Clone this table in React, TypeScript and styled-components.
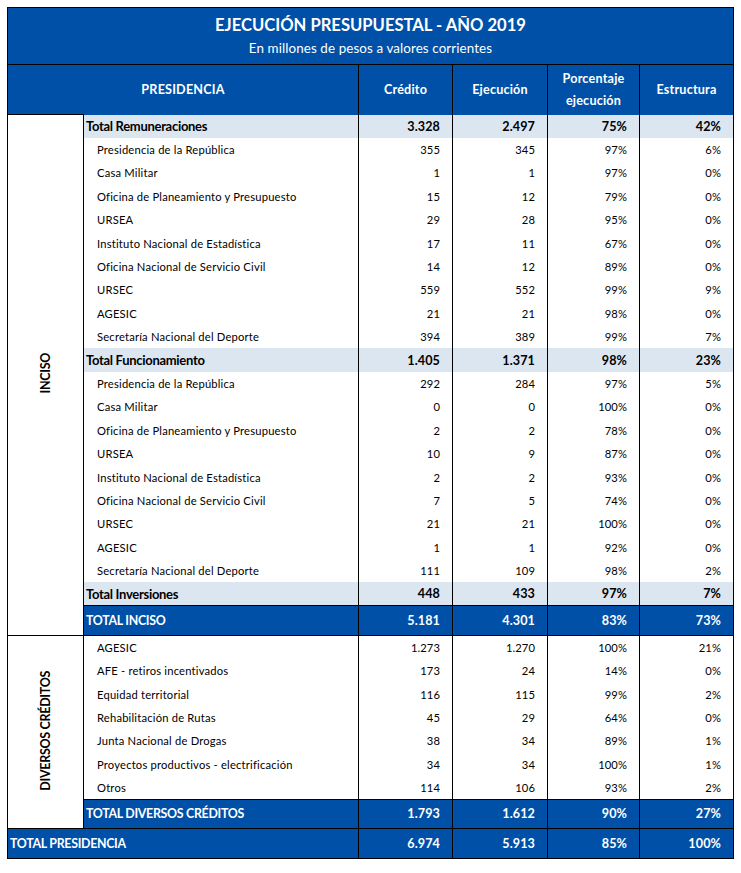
import React from "react";
import styled, { createGlobalStyle } from "styled-components";

const BLUE = "#0050a7";
const LIGHT = "#dce6f1";
const FONT = "Lato, 'Liberation Sans', sans-serif";

const Global = createGlobalStyle`
  html, body { margin: 0; padding: 0; background: #fff; }
  body { font-family: ${FONT}; color: #000; }
`;

const Page = styled.div`
  padding: 7px 0 0 7px;
`;

const Table = styled.table`
  border-collapse: collapse;
  table-layout: fixed;
  width: 727px;
  border: 1px solid #000;
  font-family: ${FONT};
`;

const TitleCell = styled.th`
  background: ${BLUE};
  color: #fff;
  height: 56px;
  padding: 0;
  text-align: center;
  border-bottom: 1px solid #000;
  vertical-align: top;
`;

const Title = styled.div`
  font-size: 16.6px;
  font-weight: 700;
  margin-top: 7px;
  line-height: 20px;
`;

const Subtitle = styled.div`
  font-size: 13.4px;
  font-weight: 400;
  margin-top: 5px;
  line-height: 17px;
  letter-spacing: 0.1px;
`;

const HeadCell = styled.th`
  background: ${BLUE};
  color: #fff;
  height: 49px;
  padding: 0;
  font-size: 12.6px;
  font-weight: 700;
  line-height: 22px;
  text-align: center;
  border-left: 1px solid #000;
  letter-spacing: 0.2px;
`;

const Row = styled.tr<{ $h?: number }>`
  height: ${(p) => p.$h ?? 23.4}px;
`;

const SideCell = styled.td`
  border-right: 1px solid #000;
  border-top: 1px solid #000;
  padding: 0;
  text-align: center;
  vertical-align: middle;
`;

const Vertical = styled.span`
  display: inline-block;
  writing-mode: vertical-rl;
  transform: rotate(180deg);
  font-size: 12.5px;
  font-weight: 700;
  letter-spacing: -0.3px;
`;

type Kind = "item" | "sub" | "total";

const Label = styled.td<{ $kind: Kind; $line?: boolean }>`
  padding: 0 0 0 ${(p) => (p.$kind === "item" ? 13 : 2)}px;
  font-size: ${(p) => (p.$kind === "item" ? 11.2 : p.$kind === "sub" ? 13 : 12.4)}px;
  font-weight: ${(p) => (p.$kind === "item" ? 400 : 700)};
  background: ${(p) => (p.$kind === "sub" ? LIGHT : p.$kind === "total" ? BLUE : "#fff")};
  color: ${(p) => (p.$kind === "total" ? "#fff" : "#000")};
  border-top: ${(p) => (p.$line ? "1px solid #000" : "none")};
  white-space: nowrap;
  letter-spacing: ${(p) => (p.$kind === "item" ? "0.2px" : "-0.3px")};
  vertical-align: middle;
`;

const Num = styled.td<{ $kind: Kind; $line?: boolean }>`
  padding: 0 12px 0 0;
  text-align: right;
  font-size: ${(p) => (p.$kind === "item" ? 11.2 : 12.6)}px;
  font-weight: ${(p) => (p.$kind === "item" ? 400 : 700)};
  background: ${(p) => (p.$kind === "sub" ? LIGHT : p.$kind === "total" ? BLUE : "#fff")};
  color: ${(p) => (p.$kind === "total" ? "#fff" : "#000")};
  border-left: 1px solid #000;
  border-top: ${(p) => (p.$line ? "1px solid #000" : "none")};
  vertical-align: middle;
  letter-spacing: 0.1px;
`;

type Line = [string, string, string, string, string];

const items = (vals: [string, string, string, string][]): Line[] => {
  const names = [
    "Presidencia de la República",
    "Casa Militar",
    "Oficina de Planeamiento y Presupuesto",
    "URSEA",
    "Instituto Nacional de Estadística",
    "Oficina Nacional de Servicio Civil",
    "URSEC",
    "AGESIC",
    "Secretaría Nacional del Deporte",
  ];
  return vals.map((v, i) => [names[i], ...v] as Line);
};

const rem = items([
  ["355", "345", "97%", "6%"],
  ["1", "1", "97%", "0%"],
  ["15", "12", "79%", "0%"],
  ["29", "28", "95%", "0%"],
  ["17", "11", "67%", "0%"],
  ["14", "12", "89%", "0%"],
  ["559", "552", "99%", "9%"],
  ["21", "21", "98%", "0%"],
  ["394", "389", "99%", "7%"],
]);

const fun = items([
  ["292", "284", "97%", "5%"],
  ["0", "0", "100%", "0%"],
  ["2", "2", "78%", "0%"],
  ["10", "9", "87%", "0%"],
  ["2", "2", "93%", "0%"],
  ["7", "5", "74%", "0%"],
  ["21", "21", "100%", "0%"],
  ["1", "1", "92%", "0%"],
  ["111", "109", "98%", "2%"],
]);

const diversos: Line[] = [
  ["AGESIC", "1.273", "1.270", "100%", "21%"],
  ["AFE - retiros incentivados", "173", "24", "14%", "0%"],
  ["Equidad territorial", "116", "115", "99%", "2%"],
  ["Rehabilitación de Rutas", "45", "29", "64%", "0%"],
  ["Junta Nacional de Drogas", "38", "34", "89%", "1%"],
  ["Proyectos productivos - electrificación", "34", "34", "100%", "1%"],
  ["Otros", "114", "106", "93%", "2%"],
];

const Cells: React.FC<{ line: Line; kind: Kind; lineTop?: boolean }> = ({ line, kind, lineTop }) => (
  <>
    <Label $kind={kind} $line={lineTop}>{line[0]}</Label>
    {line.slice(1).map((v, i) => (
      <Num key={i} $kind={kind} $line={lineTop}>{v}</Num>
    ))}
  </>
);

export default function App() {
  const incisoRows: { line: Line; kind: Kind }[] = [
    { line: ["Total Remuneraciones", "3.328", "2.497", "75%", "42%"], kind: "sub" },
    ...rem.map((l) => ({ line: l, kind: "item" as Kind })),
    { line: ["Total Funcionamiento", "1.405", "1.371", "98%", "23%"], kind: "sub" },
    ...fun.map((l) => ({ line: l, kind: "item" as Kind })),
    { line: ["Total Inversiones", "448", "433", "97%", "7%"], kind: "sub" },
  ];

  return (
    <Page>
      <Global />
      <Table>
        <colgroup>
          <col style={{ width: 76 }} />
          <col style={{ width: 275 }} />
          <col style={{ width: 94 }} />
          <col style={{ width: 95 }} />
          <col style={{ width: 92 }} />
          <col style={{ width: 94 }} />
        </colgroup>
        <thead>
          <tr>
            <TitleCell colSpan={6}>
              <Title>EJECUCIÓN PRESUPUESTAL - AÑO 2019</Title>
              <Subtitle>En millones de pesos a valores corrientes</Subtitle>
            </TitleCell>
          </tr>
          <tr>
            <HeadCell colSpan={2}>PRESIDENCIA</HeadCell>
            <HeadCell>Crédito</HeadCell>
            <HeadCell>Ejecución</HeadCell>
            <HeadCell>
              Porcentaje
              <br />
              ejecución
            </HeadCell>
            <HeadCell>Estructura</HeadCell>
          </tr>
        </thead>
        <tbody>
          {incisoRows.map((r, i) => (
            <Row key={i}>
              {i === 0 && (
                <SideCell rowSpan={incisoRows.length + 1}>
                  <Vertical>INCISO</Vertical>
                </SideCell>
              )}
              <Cells line={r.line} kind={r.kind} />
            </Row>
          ))}
          <Row $h={30}>
            <Cells line={["TOTAL INCISO", "5.181", "4.301", "83%", "73%"]} kind="total" lineTop />
          </Row>
          {diversos.map((l, i) => (
            <Row key={i}>
              {i === 0 && (
                <SideCell rowSpan={diversos.length + 1}>
                  <Vertical>DIVERSOS CRÉDITOS</Vertical>
                </SideCell>
              )}
              <Cells line={l} kind="item" lineTop={i === 0} />
            </Row>
          ))}
          <Row $h={29}>
            <Cells line={["TOTAL DIVERSOS CRÉDITOS", "1.793", "1.612", "90%", "27%"]} kind="total" lineTop />
          </Row>
          <Row $h={30}>
            <Label colSpan={2} $kind="total" $line>
              TOTAL PRESIDENCIA
            </Label>
            {["6.974", "5.913", "85%", "100%"].map((v, i) => (
              <Num key={i} $kind="total" $line>
                {v}
              </Num>
            ))}
          </Row>
        </tbody>
      </Table>
    </Page>
  );
}
